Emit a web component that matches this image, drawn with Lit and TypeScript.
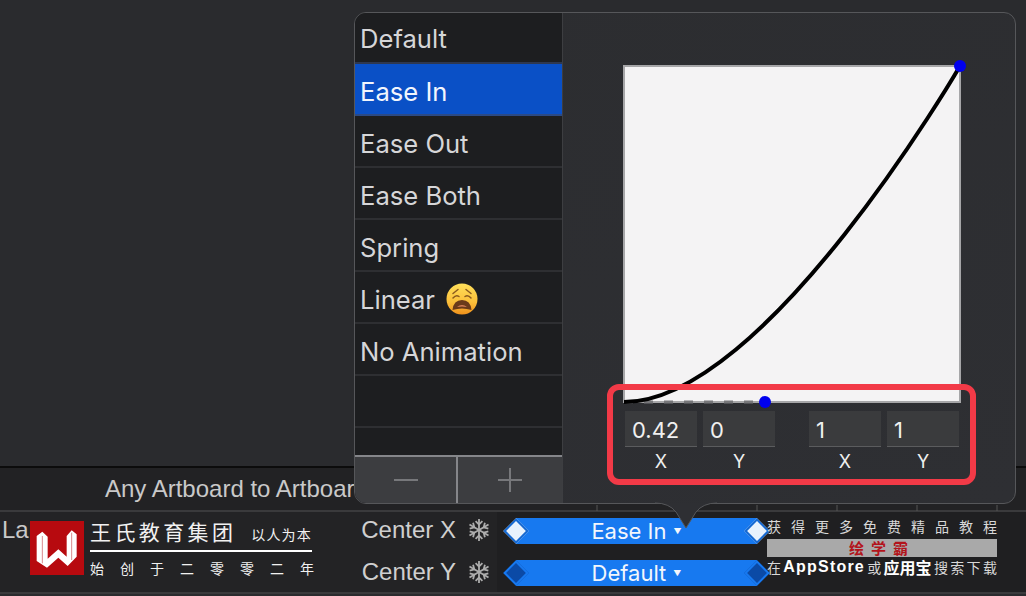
import { LitElement, html, css, svg } from "lit";
import { customElement } from "lit/decorators.js";

const ARM = svg`<path d="M12 1V23"/><path d="M8.6 3.2L12 6.6L15.4 3.2"/><path d="M8.6 20.8L12 17.4L15.4 20.8"/>`;
const SNOW = svg`<g stroke="#adadad" stroke-width="1.8" fill="none" stroke-linecap="butt">
  <g>${ARM}</g>
  <g transform="rotate(60 12 12)">${ARM}</g>
  <g transform="rotate(120 12 12)">${ARM}</g>
</g>`;

@customElement("app-root")
export class AppRoot extends LitElement {
  static styles = css`
    :host {
      display: block;
      position: relative;
      width: 1026px;
      height: 596px;
      overflow: hidden;
      background: #2a2b2e;
      font-family: Inter, "Liberation Sans", sans-serif;
    }
    .stage { height: 466px; }
    .title-row {
      height: 46px;
      box-sizing: border-box;
      border-top: 2px solid #0c0c0c;
      border-bottom: 2px solid #3a3a3c;
      background: #222224;
      display: flex;
      align-items: center;
      padding-left: 105px;
      font: 24px/1 "Liberation Sans", sans-serif;
      color: #c9c9c9;
      white-space: nowrap;
    }
    .tracks {
      height: 82px;
      box-sizing: border-box;
      display: flex;
      background: #1f1f21;
      border-bottom: 2px solid #3a3a3c;
    }
    .labels {
      width: 497px;
      flex: none;
      box-sizing: border-box;
      background: #232325;
      display: flex;
      flex-direction: column;
      gap: 6px;
    }
    .la {
      position: absolute;
      left: 2px;
      top: 517px;
      font: 24px/1.1 "Liberation Sans", sans-serif;
      color: #c9c9c9;
    }
    .prop {
      height: 36px;
      display: flex;
      align-items: center;
      justify-content: flex-end;
      gap: 11px;
      font: 24px/1 "Liberation Sans", sans-serif;
      color: #cfcfcf;
      padding-right: 6px;
    }
    .prop svg { width: 24px; height: 24px; flex: none; }
    .bars {
      flex: 1;
      padding: 6px 0 0 19px;
      display: flex;
      flex-direction: column;
      gap: 16px;
    }
    .bar {
      position: relative;
      width: 241px;
      height: 26px;
      background: #1779f0;
      display: flex;
      align-items: center;
      justify-content: center;
      gap: 7px;
      color: #f2f6fc;
      font-size: 22px;
    }
    .bar small { font-size: 8px; }
    .dia {
      position: absolute;
      top: 4px;
      width: 18px;
      height: 18px;
      box-sizing: border-box;
      transform: rotate(45deg);
      border: 2px solid #1468d2;
    }
    .dia.l { left: -9px; }
    .dia.r { right: -9px; }
    .dia.on { background: #e8f2fd; }
    .dia.off { background: #0b4aa6; border-color: #1779f0; }

    .pop {
      position: absolute;
      left: 354px;
      top: 12px;
      width: 662px;
      height: 492px;
      box-sizing: border-box;
      display: flex;
      border: 1px solid #56575a;
      border-radius: 12px;
      overflow: hidden;
      background: linear-gradient(160deg, #2c2d30, #2e2f33);
    }
    .side {
      width: 208px;
      flex: none;
      display: flex;
      flex-direction: column;
      background: #1d1e20;
      border-right: 1px solid #3d3e41;
      box-sizing: border-box;
    }
    .list { flex: 1; display: flex; flex-direction: column; overflow: hidden; }
    .item {
      height: 52px;
      flex: none;
      box-sizing: border-box;
      border-bottom: 2px solid #2e2f32;
      display: flex;
      align-items: center;
      gap: 11px;
      padding: 4px 0 0 5px;
      font-size: 25.6px;
      color: #d6d6d8;
    }
    .item:first-child { height: 51px; padding-top: 2px; border-bottom-color: #2e3850; }
    .item.sel { background: #0a50c6; color: #f2f6fd; border-bottom: 2px solid #2b4a86; }
    .item.blank { color: transparent; }
    .foot {
      height: 48px;
      box-sizing: border-box;
      flex: none;
      display: flex;
      border-top: 2px solid #85868a;
      background: #3c3d40;
      color: #77787b;
    }
    .foot div {
      display: flex;
      align-items: center;
      justify-content: center;
    }
    .foot div:first-child { width: 101px; flex: none; }
    .foot div + div { flex: 1; border-left: 2px solid #85868a; }
    .foot svg { width: 26px; height: 26px; }
    .pane {
      flex: 1;
      padding: 52px 0 0 60px;
      display: flex;
      flex-direction: column;
    }
    .canvas {
      position: relative;
      width: 338px;
      height: 338px;
      box-sizing: border-box;
      background: #f4f3f4;
      border: 2px solid #a6a6a8;
    }
    .canvas svg {
      position: absolute;
      left: -1px;
      top: -1px;
      width: 336px;
      height: 336px;
      overflow: visible;
    }
    .inputs {
      display: flex;
      gap: 34px;
      margin: 8px 0 0 2px;
    }
    .group { display: flex; gap: 6px; }
    .field { width: 72px; display: flex; flex-direction: column; align-items: center; }
    .val {
      width: 100%;
      height: 36px;
      box-sizing: border-box;
      background: #3a3b3d;
      border-bottom: 1px solid #5b5c5e;
      padding: 2px 0 0 7px;
      color: #f0f0f0;
      font-size: 22px;
      line-height: 35px;
    }
    .cap {
      margin-top: 4px;
      color: #efefef;
      font-size: 18px;
      line-height: 22px;
    }
    .mark {
      position: absolute;
      left: 607px;
      top: 384px;
      width: 369px;
      height: 101px;
      box-sizing: border-box;
      border: 6px solid #f23a47;
      border-radius: 12px;
    }
    .tip {
      position: absolute;
      left: 655px;
      top: 502px;
      width: 62px;
      height: 28px;
    }
    .ticks { position: absolute; left: 0; top: 505px; width: 1026px; height: 6px; }

    .logo {
      position: absolute;
      left: 30px;
      top: 521px;
      width: 54px;
      height: 54px;
      background: #b70a0f;
    }
    .logo svg { width: 54px; height: 54px; display: block; }
    .brand {
      position: absolute;
      left: 90px;
      top: 516px;
      width: 224px;
      font-family: "Noto Sans CJK SC", sans-serif;
      color: #f1f1f1;
    }
    .brand .a { display: flex; align-items: baseline; justify-content: space-between; height: 34px; }
    .brand .a b { font-weight: 400; font-size: 21px; letter-spacing: 3.4px; line-height: 30px; }
    .brand .a i { font-style: normal; font-size: 14px; letter-spacing: 1.2px; margin-right: 2px; }
    .brand .rule { height: 2px; background: #fff; width: 222px; }
    .brand .c { font-size: 14px; line-height: 32px; text-align-last: justify; }
    .promo {
      position: absolute;
      left: 767px;
      top: 518px;
      width: 230px;
      font-family: "Noto Sans CJK SC", sans-serif;
      font-size: 14px;
      color: #d8d8d8;
    }
    .promo .l1 { height: 21px; line-height: 17px; text-align-last: justify; }
    .promo .l2 {
      height: 18px;
      background: #a9a9a9;
      color: #b3141b;
      font-weight: 700;
      font-size: 15px;
      line-height: 18px;
      text-align: center;
      letter-spacing: 7px;
    }
    .promo .l3 {
      height: 22px;
      line-height: 20px;
      display: flex;
      justify-content: space-between;
      white-space: nowrap;
    }
    .promo .l3 b { color: #fff; font-weight: 700; font-size: 16px; letter-spacing: 1.2px; font-family: "Liberation Sans", "Noto Sans CJK SC", sans-serif; }
    .promo .l3 b.z { font-family: "Noto Sans CJK SC", sans-serif; font-size: 16px; letter-spacing: 0; }
  `;

  render() {
    const items = ["Default", "Ease In", "Ease Out", "Ease Both", "Spring"];
    return html`
      <div class="stage"></div>
      <div class="title-row">Any Artboard to Artboard</div>
      <div class="tracks">
        <div class="labels">
          <div class="prop">Center X <svg viewBox="0 0 24 24">${SNOW}</svg></div>
          <div class="prop">Center Y <svg viewBox="0 0 24 24">${SNOW}</svg></div>
        </div>
        <div class="bars">
          <div class="bar">Ease In <small>▼</small><span class="dia on l"></span><span class="dia on r"></span></div>
          <div class="bar">Default <small>▼</small><span class="dia off l"></span><span class="dia off r"></span></div>
        </div>
      </div>
      <div class="la">La</div>

      <svg class="ticks" viewBox="0 0 1026 6">
        <path d="M597 0V6M757 0V6M837 0V6M917 0V6M997 0V6" stroke="#555" stroke-width="1"/>
      </svg>

      <div class="pop">
        <div class="side">
          <div class="list">
            ${items.map((t, i) => html`<div class="item ${i === 1 ? "sel" : ""}">${t}</div>`)}
            <div class="item">Linear
              <svg width="32" height="32" viewBox="0 0 32 32">
                <defs><linearGradient id="face" x1="0" y1="0" x2="0" y2="1">
                  <stop offset="0" stop-color="#ffe05a"/><stop offset="0.6" stop-color="#fbbf3a"/><stop offset="1" stop-color="#f0921c"/>
                </linearGradient></defs>
                <circle cx="16" cy="16" r="15.5" fill="url(#face)"/>
                <path d="M7 10.5L12 6.5M25 10.5L20 6.5M7 15Q10 11.5 13 13.5M25 15Q22 11.5 19 13.5" stroke="#8a5a1f" stroke-width="1.5" fill="none" stroke-linecap="round"/>
                <path d="M6.5 27Q7.5 17 16 17Q24.5 17 25.5 27Q16 24 6.5 27Z" fill="#6b3a1a"/>
                <path d="M11 24Q16 20 21 24Q16 23 11 24Z" fill="#d9815a"/>
              </svg>
            </div>
            <div class="item">No Animation</div>
            <div class="item blank"></div>
            <div class="item blank"></div>
          </div>
          <div class="foot">
            <div><svg viewBox="0 0 26 26"><path d="M1 13H25" stroke="currentColor" stroke-width="2"/></svg></div>
            <div><svg viewBox="0 0 26 26"><path d="M1 13H25M13 1V25" stroke="currentColor" stroke-width="2"/></svg></div>
          </div>
        </div>
        <div class="pane">
          <div class="canvas">
            <svg viewBox="0 0 336 336">
              <path d="M0 336H141" stroke="#77777a" stroke-width="3" stroke-dasharray="9 11" fill="none"/>
              <path d="M0 336C141 336 336 0 336 0" stroke="#000" stroke-width="4" fill="none"/>
              <circle cx="141" cy="336" r="6" fill="#0000ee"/>
              <circle cx="336" cy="0" r="6" fill="#0000ee"/>
            </svg>
          </div>
          <div class="inputs">
            <div class="group">
              <div class="field"><div class="val">0.42</div><div class="cap">X</div></div>
              <div class="field"><div class="val">0</div><div class="cap">Y</div></div>
            </div>
            <div class="group">
              <div class="field"><div class="val">1</div><div class="cap">X</div></div>
              <div class="field"><div class="val">1</div><div class="cap">Y</div></div>
            </div>
          </div>
        </div>
      </div>

      <svg class="tip" viewBox="0 0 62 28">
        <path d="M0 1Q14 1 21 10L31 26L41 10Q48 1 62 1Z" fill="#2e2f33"/>
        <path d="M0 1Q14 1 21 10L31 26L41 10Q48 1 62 1" fill="none" stroke="#56575a" stroke-width="1"/>
      </svg>

      <div class="mark"></div>

      <div class="logo">
        <svg viewBox="15 15 162 162">
          <path d="M35 60L52 47L68 62V128L100 100L125 122V60L140 43L155 55V122L128 150L100 125L66 155L35 135Z" fill="#fff"/>
          <path d="M52 60V142M140 50V132" stroke="#d98a8d" stroke-width="3" fill="none"/>
        </svg>
      </div>
      <div class="brand">
        <div class="a"><b>王氏教育集团</b><i>以人为本</i></div>
        <div class="rule"></div>
        <div class="c">始 创 于 二 零 零 二 年</div>
      </div>
      <div class="promo">
        <div class="l1">获 得 更 多 免 费 精 品 教 程</div>
        <div class="l2">绘学霸</div>
        <div class="l3"><span>在</span><b>AppStore</b><span>或</span><b class="z">应用宝</b><span>搜</span><span>索</span><span>下</span><span>载</span></div>
      </div>
    `;
  }
}
